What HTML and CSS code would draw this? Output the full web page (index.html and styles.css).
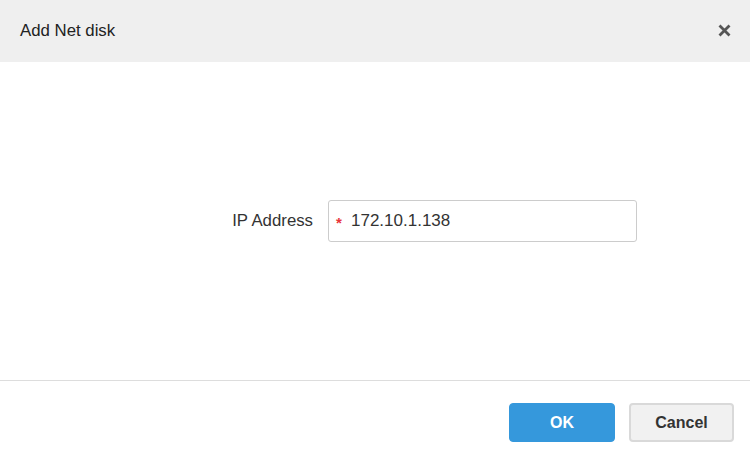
FILE: index.html
```html
<!DOCTYPE html>
<html>
<head>
<meta charset="utf-8">
<link rel="stylesheet" href="styles.css">
</head>
<body>
<div class="dialog">
  <div class="header">
    <span class="title">Add Net disk</span>
    <span class="close" aria-label="Close">
      <svg width="13" height="13" viewBox="0 0 13 13"><path d="M1.5 1.5 L11.5 11.5 M11.5 1.5 L1.5 11.5" stroke="#555" stroke-width="2.8" stroke-linecap="butt"/></svg>
    </span>
  </div>
  <div class="body">
    <div class="row">
      <label class="label">IP Address</label>
      <div class="input">
        <span class="req">*</span>
        <span class="value">172.10.1.138</span>
      </div>
    </div>
  </div>
  <div class="footer">
    <button class="btn btn-primary">OK</button>
    <button class="btn btn-default">Cancel</button>
  </div>
</div>
</body>
</html>
```
FILE: styles.css
```css
html, body {
  margin: 0;
  padding: 0;
  background: #fff;
}
body {
  font-family: "Liberation Sans", Arial, sans-serif;
  color: #333;
}
.dialog {
  width: 750px;
  height: 458px;
  display: flex;
  flex-direction: column;
}
.header {
  height: 62px;
  background: #efefef;
  display: flex;
  align-items: center;
  justify-content: space-between;
  padding: 0 19px 0 20px;
  box-sizing: border-box;
}
.title {
  font-size: 16.8px;
  color: #222;
}
.close {
  display: flex;
  width: 13px;
  height: 13px;
  margin-top: -1px;
}
.body {
  height: 318px;
  display: flex;
  align-items: center;
}
.row {
  display: flex;
  align-items: center;
  padding-left: 150px;
}
.label {
  text-align: right;
  font-size: 16.8px;
  color: #333;
  padding-right: 15px;
  box-sizing: border-box;
  width: 178px;
}
.input {
  width: 309px;
  height: 42px;
  box-sizing: border-box;
  border: 1px solid #ccc;
  border-radius: 3px;
  display: flex;
  align-items: center;
  padding-left: 7px;
  font-size: 17px;
  color: #333;
}
.req {
  color: #e8343a;
  font-size: 15px;
  font-weight: bold;
  width: 15px;
  margin-top: 3px;
}
.footer {
  border-top: 1px solid #ddd;
  flex: 1;
  display: flex;
  justify-content: flex-end;
  align-items: flex-start;
  padding: 22px 16px 0 0;
  gap: 14px;
}
.btn {
  height: 39px;
  border-radius: 4px;
  font-family: "Liberation Sans", Arial, sans-serif;
  font-size: 16px;
  font-weight: bold;
  padding: 0;
  margin: 0;
  box-sizing: border-box;
}
.btn-primary {
  width: 106px;
  background: #3598dc;
  border: 1px solid #3598dc;
  color: #fff;
}
.btn-default {
  width: 105px;
  background: #f1f1f1;
  border: 2px solid #d9d9d9;
  color: #333;
}
```
